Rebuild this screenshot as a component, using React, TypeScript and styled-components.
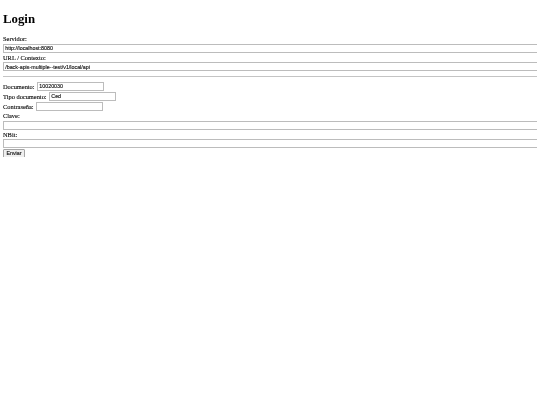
import React, { FC } from 'react';
import styled, { createGlobalStyle } from 'styled-components';

const GlobalStyle = createGlobalStyle`
  html, body {
    background: #fff;
  }
  body {
    margin: 3.2px;
    font-family: "Liberation Serif", "Times New Roman", serif;
    font-size: 6.4px;
    color: #000;
  }
`;

// own layer: keeps the tiny text grey-antialiased like the reference
const Page = styled.div`
  will-change: transform;
  -webkit-text-stroke: 0.15px #333;
`;

const Title = styled.h1`
  font-size: 12.8px;
  font-weight: bold;
  line-height: 14.7px;
  margin: 8.6px 0 7.4px;
  -webkit-text-stroke: 0;
`;

const Form = styled.form`
  display: flex;
  flex-direction: column;
`;

const FieldLabel = styled.label`
  display: block;
  line-height: 9px;
  height: 9px;
`;

const TextInput = styled.input<{ $full?: boolean }>`
  box-sizing: border-box;
  display: block;
  width: ${(p) => (p.$full ? 'calc(100% + 3.2px)' : '67px')};
  height: 9px;
  margin: ${(p) => (p.$full ? '0.5px 0 0' : '0')};
  padding: 0 1.2px;
  border: 1px solid #bcbcbc;
  border-radius: 0;
  font-family: "Liberation Sans", Arial, sans-serif;
  font-size: 5.33px;
  line-height: 7px;
  color: #000;
  background: #fff;
  outline: none;
`;

const Divider = styled.hr`
  margin: 5px 0 4px;
  border: none;
  border-top: 1px solid #c4c4c4;
  height: 0;
`;

const InlineRow = styled.div`
  display: flex;
  align-items: center;
  gap: 2.5px;
  height: 10px;
`;

const InlineLabel = styled.label`
  line-height: 9px;
`;

const SubmitButton = styled.button`
  align-self: flex-start;
  box-sizing: border-box;
  height: 9px;
  margin-top: 0.5px;
  padding: 0 2.4px;
  border: 1px solid #a5a5a5;
  border-radius: 1px;
  background: #efefef;
  font-family: "Liberation Sans", Arial, sans-serif;
  font-size: 5.33px;
  line-height: 7px;
  color: #000;
`;

const App: FC = () => {
  return (
    <Page>
      <GlobalStyle />
      <Title>Login</Title>
      <Form onSubmit={(e) => e.preventDefault()}>
        <FieldLabel>Servidor:</FieldLabel>
        <TextInput $full defaultValue="http://localhost:8080" />
        <FieldLabel>URL / Contexto:</FieldLabel>
        <TextInput $full defaultValue="/back-apis-multiple--test/v1/local/api" />
        <Divider />
        <InlineRow>
          <InlineLabel>Documento:</InlineLabel>
          <TextInput defaultValue="10020030" />
        </InlineRow>
        <InlineRow>
          <InlineLabel>Tipo documento:</InlineLabel>
          <TextInput defaultValue="Ced" />
        </InlineRow>
        <InlineRow>
          <InlineLabel>Contraseña:</InlineLabel>
          <TextInput type="password" />
        </InlineRow>
        <FieldLabel>Clave:</FieldLabel>
        <TextInput $full />
        <FieldLabel>NBit:</FieldLabel>
        <TextInput $full />
        <SubmitButton type="submit">Enviar</SubmitButton>
      </Form>
    </Page>
  );
};

export default App;
